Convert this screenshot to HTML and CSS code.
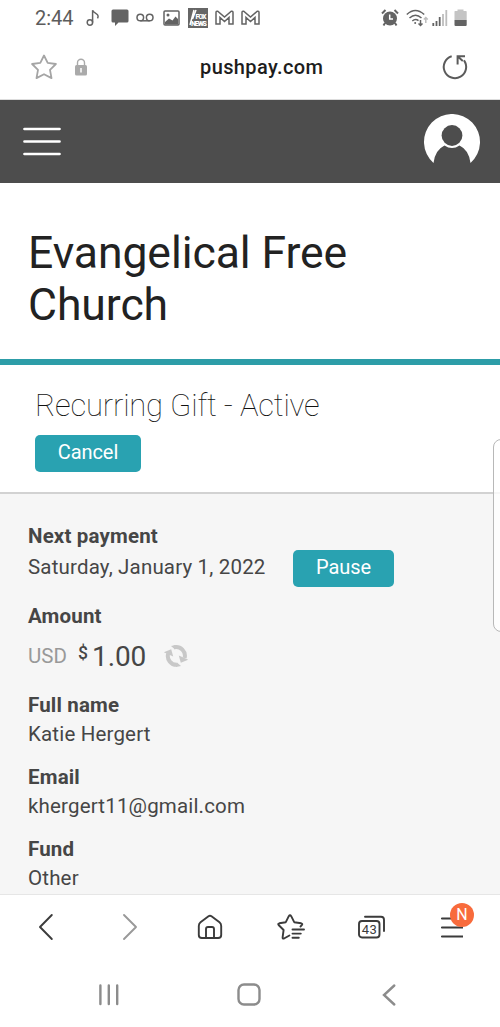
FILE: index.html
```html
<!DOCTYPE html>
<html lang="en">
<head>
<meta charset="utf-8">
<meta name="viewport" content="width=device-width">
<title>Recurring Gift</title>
<link rel="stylesheet" href="styles.css">
</head>
<body>
<div class="phone">
  <div class="status">
    <span class="clock">2:44</span>
    <svg class="note" width="14" height="18" viewBox="0 0 14 18"><path d="M6.600 13.500V1.200c.5 3 5.400 2.800 5.500 5.800 0 1-.3 1.800-.6 2.300"/><circle cx="3.900" cy="13.500" r="2.700"/></svg>
    <svg class="chat" width="18" height="18" viewBox="0 0 18 18"><path d="M2 .5h14q1.500 0 1.500 1.500v10q0 1.500-1.500 1.500H7.500L4 17v-3.500H2Q.5 13.500.5 12V2Q.5.500 2 .5z"/></svg>
    <svg class="voicemail" width="18" height="10" viewBox="0 0 18 10"><circle cx="4.300" cy="4.500" r="3.300"/><circle cx="13.700" cy="4.500" r="3.300"/><path d="M4.300 7.800h9.400"/></svg>
    <svg class="photo" width="17" height="16" viewBox="0 0 17 16"><rect x="1" y="1" width="15" height="14" rx="1"/><path d="M2 12 6 8.500l3.500 2L12.500 6.500 15 9v5.500H2z"/><circle cx="5" cy="5" r="1.500"/></svg>
    <svg class="news" width="20" height="20" viewBox="0 0 20 20"><rect width="20" height="20"/><path d="m2 17 4-15M4.500 11 8 2"/><text x="7.500" y="10.500" font-size="7" textLength="11">FOX</text><text x="3" y="17.500" font-size="7" textLength="16">NEWS</text></svg>
    <svg class="mail" width="19" height="16" viewBox="0 0 19 16"><path d="M1 2.500Q1 1 2.700 1.200L9.500 7l6.800-5.800Q18 1 18 2.500V14h-4V7.500l-4.500 4L5 7.500V14H1z"/></svg>
    <svg class="mail second" width="19" height="16" viewBox="0 0 19 16"><path d="M1 2.500Q1 1 2.700 1.200L9.500 7l6.800-5.800Q18 1 18 2.500V14h-4V7.500l-4.500 4L5 7.500V14H1z"/></svg>
    <svg class="alarm" width="18" height="18" viewBox="0 0 18 18"><circle cx="9" cy="9.500" r="7"/><path class="line" d="M1 4.500 4.500 1M17 4.500 13.500 1M4 14l-1.500 2.500M14 14l1.500 2.500"/><path class="hands" d="M8.700 5.500v4.500H12"/></svg>
    <svg class="wifi" width="23" height="18" viewBox="0 0 23 18"><path d="M.8 5.500q8.500-8 17.400 0M3.500 9q6-5.500 12 0M6.300 12q3.200-2.800 6.200-.3"/><circle cx="9.200" cy="14" r="1"/><path d="M14.500 11v5.500m-2-2 2 2 2-2"/><path class="faint" d="M19.800 14V8.500m-2 2 2-2 2 2"/></svg>
    <svg class="signal" width="16" height="18" viewBox="0 0 16 18"><path d="M1.300 14v3M4.500 12v5M7.700 8v9"/><path class="faint" d="M11 5v12M14.300 1v16"/></svg>
    <svg class="battery" width="13" height="18" viewBox="0 0 13 18"><path fill="#c4c4c4" d="M1 2h2.500V.5h6V2H12q.7 0 .7.700V11H.5V2.700Q.5 2 1 2z"/><path fill="#636363" d="M.5 11h12.200v5q0 1-1 1H1.500q-1 0-1-1z"/></svg>
  </div>
  <div class="address">
    <svg width="28" height="28" viewBox="0 0 28 28" class="star"><path d="m14 2.500 3.700 7.400 8.200 1.100-5.900 5.900 1.500 8.200-7.500-3.900-7.500 3.900L8 16.900 2.100 11l8.200-1.100z"/></svg>
    <svg width="14" height="18" viewBox="0 0 14 18" class="lock"><path d="M3.500 8V4.800a3.500 3.500 0 0 1 7 0V8" fill="none" stroke="#aaa" stroke-width="1.400"/><rect x="1" y="7" width="12" height="10.500" rx="1.500" fill="#aaa"/><path d="M7 10v4.500" stroke="#fff" stroke-width="1.500"/></svg>
    <span class="domain">pushpay.com</span>
    <svg width="28" height="28" viewBox="0 0 28 28" class="reload"><path d="M10.700 3.200A11.200 11.200 0 1 0 23 7.300M16.600 11.500V3.200H24M16.800 3.500l5 4.500"/></svg>
  </div>
  <header class="appbar">
    <svg width="38" height="30" viewBox="0 0 38 30"><path d="M1.500 2h35M1.500 14.500h35M1.500 27h35" stroke="#fff" stroke-width="2.700" stroke-linecap="round"/></svg>
    <svg class="avatar" width="56" height="50" viewBox="0 0 56 50"><path fill="#fff" d="M9.500 49A28 28 0 1 1 46.500 49Q45 36 35.500 31.500q-7.500 5-15 0Q11 36 9.500 49z"/><circle cx="28" cy="21.500" r="10.400" fill="#4d4d4d"/></svg>
  </header>
  <main class="page">
    <h1 class="church">Evangelical Free<br>Church</h1>
    <section class="gift">
      <h2 class="gift-title">Recurring Gift - Active</h2>
      <button class="btn cancel">Cancel</button>
    </section>
    <section class="details">
      <div class="schedule">
        <div><h3>Next payment</h3><p class="date">Saturday, January 1, 2022</p></div>
        <button class="btn pause">Pause</button>
      </div>
      <h3>Amount</h3>
      <div class="amount">
        <span class="usd">USD</span><span class="dollar">$</span><span class="value">1.00</span>
        <svg width="26" height="24" viewBox="0 0 26 24"><path d="M5.200 9.500A8.800 8.800 0 0 0 14 20.800M11 3.200A8.800 8.800 0 0 1 21.600 14" fill="none" stroke="#c8c8c8" stroke-width="4"/><path fill="#c8c8c8" d="m.8 8.300 7.400-3 2 7.200zM25.200 15.700l-7.400 3-2-7.200zM8 2l5-1-1 4.500zM18 22l-5 1 1-4.500z"/></svg>
      </div>
      <dl class="fields">
        <dt>Full name</dt><dd>Katie Hergert</dd>
        <dt>Email</dt><dd>khergert11@gmail.com</dd>
        <dt>Fund</dt><dd>Other</dd>
      </dl>
    </section>
  </main>
  <nav class="browser">
    <svg width="16" height="28" viewBox="0 0 16 28" class="back"><path d="M13.800 2 2 14l11.800 12"/></svg>
    <svg width="16" height="28" viewBox="0 0 16 28" class="forward"><path d="m2 2 12 12L2 26"/></svg>
    <svg width="26" height="26" viewBox="0 0 26 26" class="home"><path d="m11.500 2.300-8 6Q1.800 9.600 1.800 12v9q0 3 3 3h16.400q3 0 3-3v-9q0-2.400-1.700-3.700l-8-6q-1.500-1-3 0zM9 24v-9q0-2 2-2h4q2 0 2 2v9"/></svg>
    <svg width="28" height="28" viewBox="0 0 28 28" class="bookmarks"><path d="M12.400 22.500 7 25.500q-1.500.5-1.400-1.200l1-7.300-5-5q-1-1.300.7-1.700l6.500-1.100 3-6q1.200-2 2.400 0l3 6 7 1.100q1.800.5.6 1.900l-1.300 1.300M15.500 16.500H27M15.500 20.600h8.300M15.500 24.700h6.300"/></svg>
    <svg width="29" height="26" viewBox="0 0 29 26" class="tabs"><rect x="2" y="7" width="20.500" height="16.500" rx="3"/><path d="M8 2.700h16q3 0 3 3V17"/><text x="4.700" y="19.900" textLength="15">43</text></svg>
    <div class="menu">
      <svg width="22" height="22" viewBox="0 0 22 22"><path d="M.8 1.500h21M.8 10.500h21M.8 19.500h21"/></svg>
      <span class="badge">N</span>
    </div>
  </nav>
  <div class="system">
    <svg width="22" height="24" viewBox="0 0 22 24"><path d="M2.400 2.500v18.500M10.800 2.500v18.500M19.200 2.500v18.500"/></svg>
    <svg class="sys-home" width="24" height="24" viewBox="0 0 24 24"><rect x="1.500" y="1.500" width="21" height="20" rx="5.500"/></svg>
    <svg class="sys-back" width="14" height="24" viewBox="0 0 14 24"><path d="M12.300 2.500 2 12l10.300 9.500"/></svg>
  </div>
  <div class="edge-panel"></div>
</div>
</body>
</html>
```

FILE: styles.css
```css
* { box-sizing: border-box; }
body { margin: 0; font-family: Roboto, sans-serif; background: #fff; color: #464646; }
h1, h2, h3, p, dl, dd { margin: 0; font-weight: 400; }
svg { display: block; flex: none; }
.phone { position: relative; width: 500px; height: 1027px; display: flex; flex-direction: column; overflow: hidden; }

.status { height: 35px; padding-left: 35px; display: flex; align-items: center; fill: none; stroke: #636363; stroke-width: 1.500; }
.clock { width: 51px; font-size: 20px; line-height: 36px; color: #5c5c5c; }
.chat { margin-left: 11px; fill: #636363; stroke: none; }
.voicemail { margin-left: 7px; }
.photo { margin-left: 9px; }
.photo path, .photo circle { fill: #636363; stroke: none; }
.news { margin-left: 8px; }
.news rect { fill: #666; stroke: none; }
.news path { stroke: #fff; }
.news text { fill: #fff; stroke: none; font-weight: 900; }
.mail { margin-left: 7px; }
.mail.second { margin-left: 7px; }
.alarm { margin-left: 121px; }
.alarm circle { fill: #636363; stroke: none; }
.alarm .line { stroke-width: 2; }
.alarm .hands { stroke: #fff; }
.wifi { margin-left: 7px; }
.wifi circle { fill: #636363; stroke: none; }
.signal { margin-left: 3px; }
.signal path { stroke-width: 1.800; }
.faint { stroke: #bdbdbd; }
.battery { margin-left: 6px; stroke: none; }

.address { height: 65px; padding-left: 30px; border-bottom: 1px solid #ddd; display: flex; align-items: center; }
.star { fill: none; stroke: #a5a5a5; stroke-width: 1.800; stroke-linejoin: round; }
.lock { margin-left: 16px; }
.domain { margin-left: 112px; width: 241px; font-size: 20px; font-weight: 500; color: #1d1d1d; letter-spacing: .4px; }
.reload { fill: none; stroke: #5b5b5b; stroke-width: 2; }

.appbar { height: 83px; padding: 0 20.500px 0 22.500px; background: #4d4d4d; display: flex; align-items: center; justify-content: space-between; }
.avatar { margin-bottom: 6px; }

.page { height: 711px; overflow: hidden; }
.church { height: 182px; padding: 44px 28px 0; border-bottom: 6px solid #2d9da8; font-size: 44.500px; line-height: 52px; letter-spacing: -.07px; color: #222; }
.gift { height: 129px; padding: 19px 35px 0; border-bottom: 2px solid #d2d2d2; }
.gift-title { height: 51px; font-size: 31px; line-height: 43px; letter-spacing: -.2px; font-weight: 100; color: #111; }
.btn { display: block; height: 37px; padding: 0 0 3px; border: 0; border-radius: 5px; background: #29a2b1; color: #fff; font: 20px/34px Roboto, sans-serif; letter-spacing: -.1px; }
.cancel { width: 106px; }
.pause { width: 101px; margin: 28px 0 0 27.500px; }
.details { height: 401px; padding: 28px 28px 0; background: #f6f6f6; font-size: 20.500px; letter-spacing: .17px; }
.details h3, .fields dt { font-size: 20.500px; line-height: 29px; font-weight: 700; }
.schedule { height: 80px; display: flex; }
.date { line-height: 33px; white-space: nowrap; }
.amount { height: 60px; display: flex; align-items: center; padding-bottom: 10px; }
.usd { color: #999; width: 49px; letter-spacing: 0; }
.dollar { width: 15px; padding: 0 0 7px 1px; font-size: 17.500px; font-weight: 500; }
.value { width: 71px; font-size: 28px; letter-spacing: -.1px; }
.fields dd { height: 43px; line-height: 29px; }

.browser { height: 66px; padding-left: 38px; border-top: 1px solid #e6e6e6; display: flex; align-items: center; fill: none; stroke: #3b3b3b; stroke-width: 1.900; stroke-linecap: round; stroke-linejoin: round; }
.browser > svg { margin-bottom: 1px; }
.browser .forward { margin-left: 68px; stroke: #999; }
.browser .home { margin-left: 59px; }
.browser .bookmarks { margin-left: 54px; }
.browser .tabs { margin-left: 52px; }
.tabs text { fill: #3b3b3b; stroke: none; font-size: 13px; }
.menu { position: relative; margin-left: 55px; }
.badge { position: absolute; left: 9px; top: -14px; width: 24px; height: 24px; border-radius: 50%; background: #f86b3c; color: #fff; font-size: 16px; line-height: 24px; text-align: center; }
.system { height: 67px; padding: 2px 0 0 98px; display: flex; align-items: center; fill: none; stroke: #8c8c8c; stroke-width: 2.400; stroke-linecap: round; }
.sys-home { margin-left: 116.500px; }
.sys-back { margin-left: 121px; }
.edge-panel { position: absolute; left: 493px; top: 439px; width: 16px; height: 193px; border: 1px solid #b8b8b8; border-radius: 9px; background: rgba(255, 255, 255, .8); }
```
